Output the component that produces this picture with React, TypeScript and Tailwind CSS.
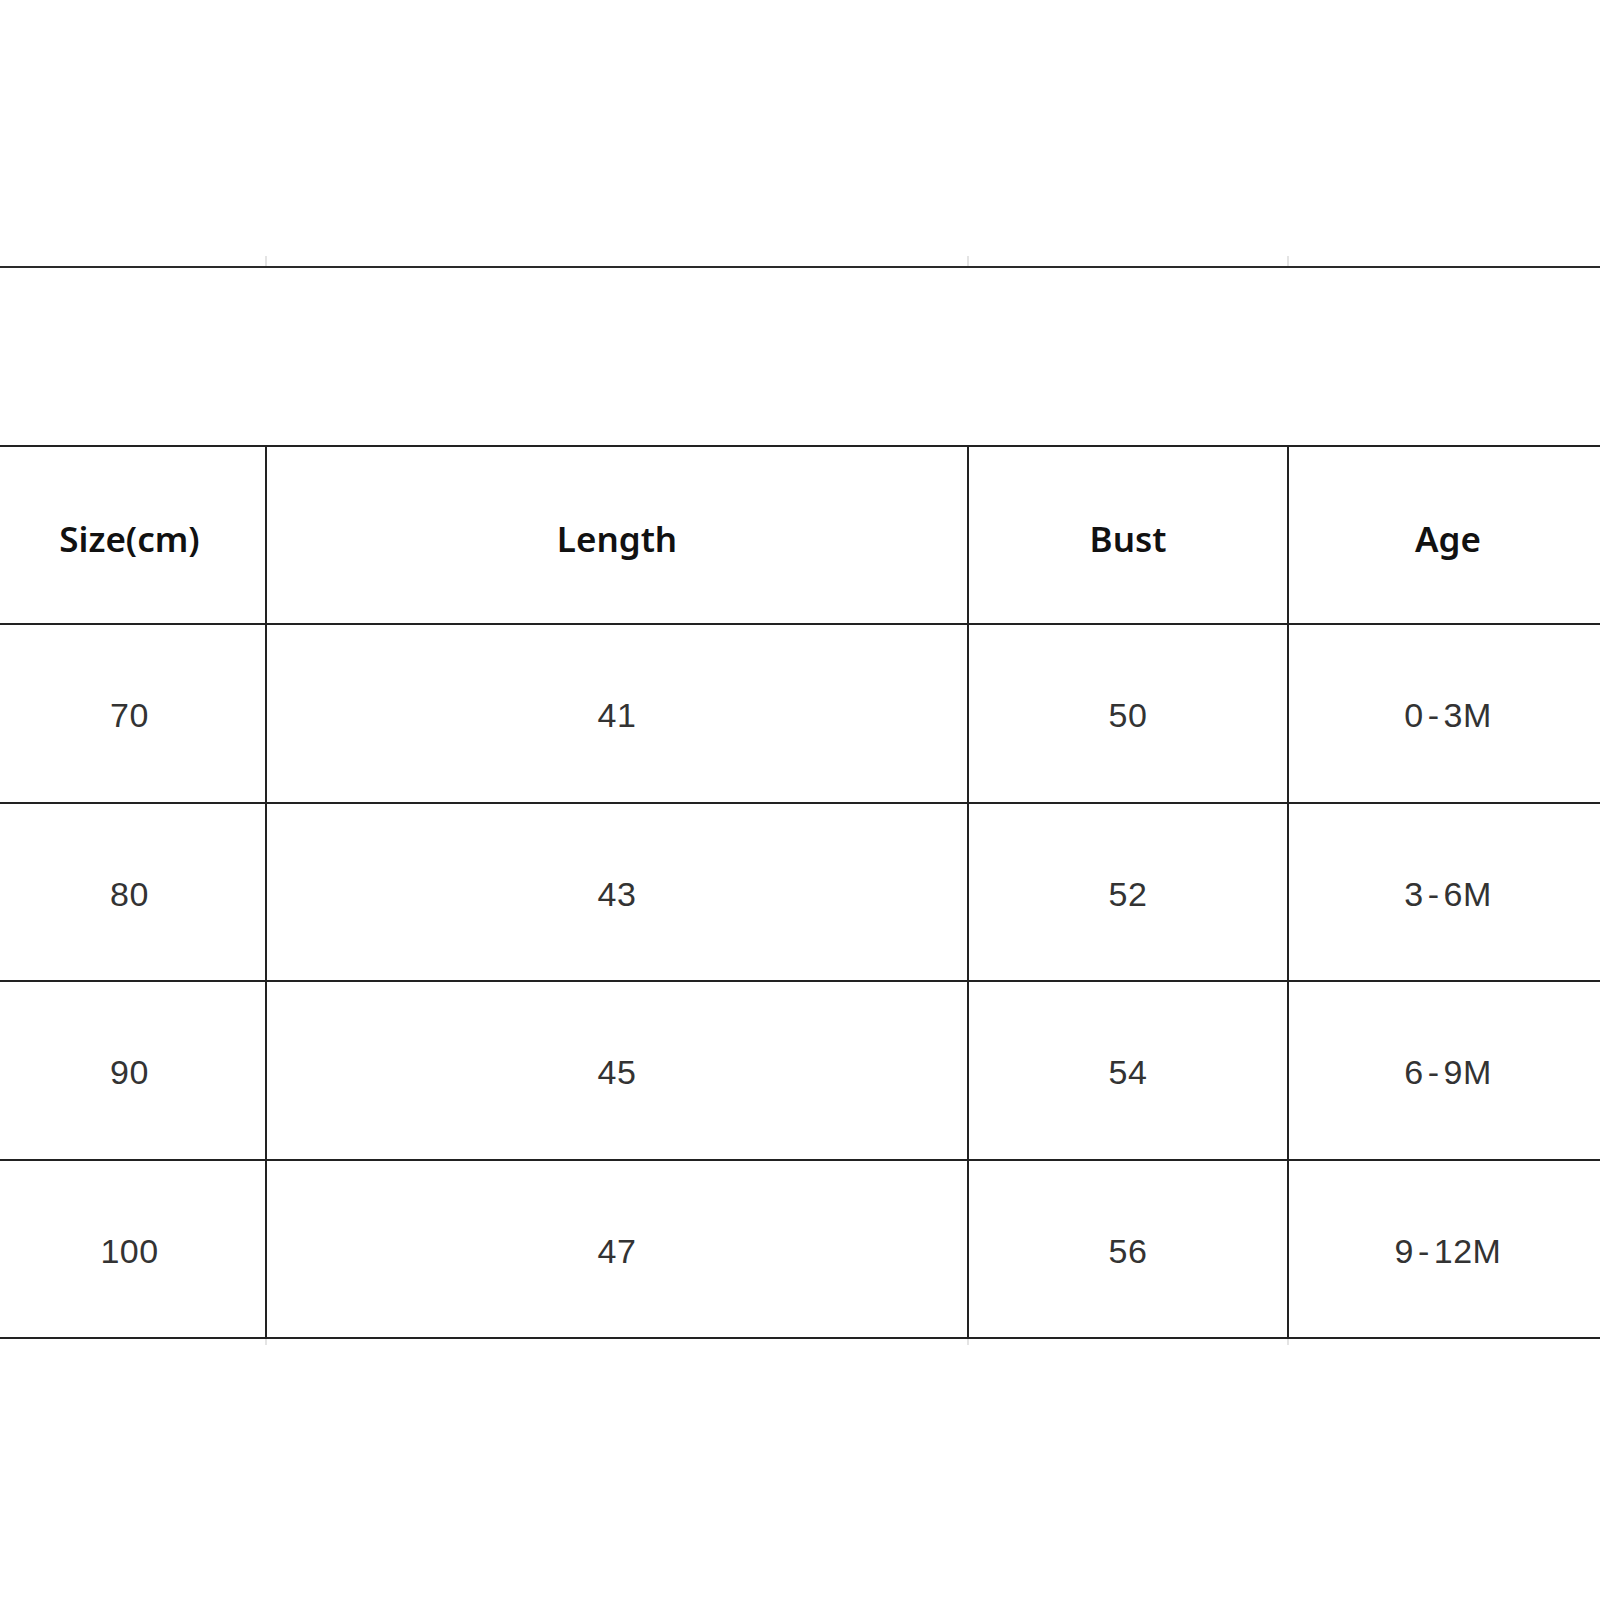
const COLS = ['w-[273px]', 'w-[702px]', 'w-[320px]', 'w-[320px]'];

const HEAD = ['Size(cm)', 'Length', 'Bust', 'Age'];

const ROWS = [
  ['70', '41', '50', '0-3M'],
  ['80', '43', '52', '3-6M'],
  ['90', '45', '54', '6-9M'],
  ['100', '47', '56', '9-12M']
];

const ROW_H = ['h-[178px]', 'h-[179px]', 'h-[178px]', 'h-[179px]', 'h-[178px]'];

function Ticks({ className }: { className: string }) {
  return (
    <div className={`flex ${className}`}>
      {COLS.map((w, i) => (
        <div key={i} className={`${w} shrink-0 border-r-2 border-[#e4e4e4]`} />
      ))}
    </div>
  );
}

// the age ranges have a loosely spaced dash in the source sheet
function CellText({ text }: { text: string }) {
  const parts = text.split('-');
  if (parts.length < 2) return <>{text}</>;
  return (
    <>
      {parts[0]}
      <span className="px-[4px]">-</span>
      {parts[1]}
    </>
  );
}

function Row({ cells, head, h }: { cells: string[]; head?: boolean; h: string }) {
  return (
    <div className={`flex ${h} border-b-2 border-[#222]`}>
      {cells.map((c, i) => (
        <div
          key={i}
          className={`${COLS[i]} shrink-0 flex items-center justify-center border-r-2 border-[#222] ${
            head
              ? "font-['Noto_Sans',sans-serif] font-semibold text-[35px] text-[#111] pt-[8px]"
              : "font-['Liberation_Sans',Arial,sans-serif] text-[34px] text-[#333] pt-[4px] tracking-[0.5px]"
          }`}
        >
          <CellText text={c} />
        </div>
      ))}
    </div>
  );
}

export default function App() {
  return (
    <div className="w-[1600px] h-[1600px] bg-white overflow-hidden">
      <div className="-ml-[6px] w-[1615px] pt-[256px]">
        <Ticks className="h-[10px]" />
        <div className="border-t-2 border-[#2a2a2a]" />
        <div className="h-[177px]" />
        <div className="border-t-2 border-[#222]">
          <Row cells={HEAD} head h={ROW_H[0]} />
          {ROWS.map((r, i) => (
            <Row key={i} cells={r} h={ROW_H[i + 1]} />
          ))}
        </div>
        <Ticks className="h-[6px]" />
      </div>
    </div>
  );
}
